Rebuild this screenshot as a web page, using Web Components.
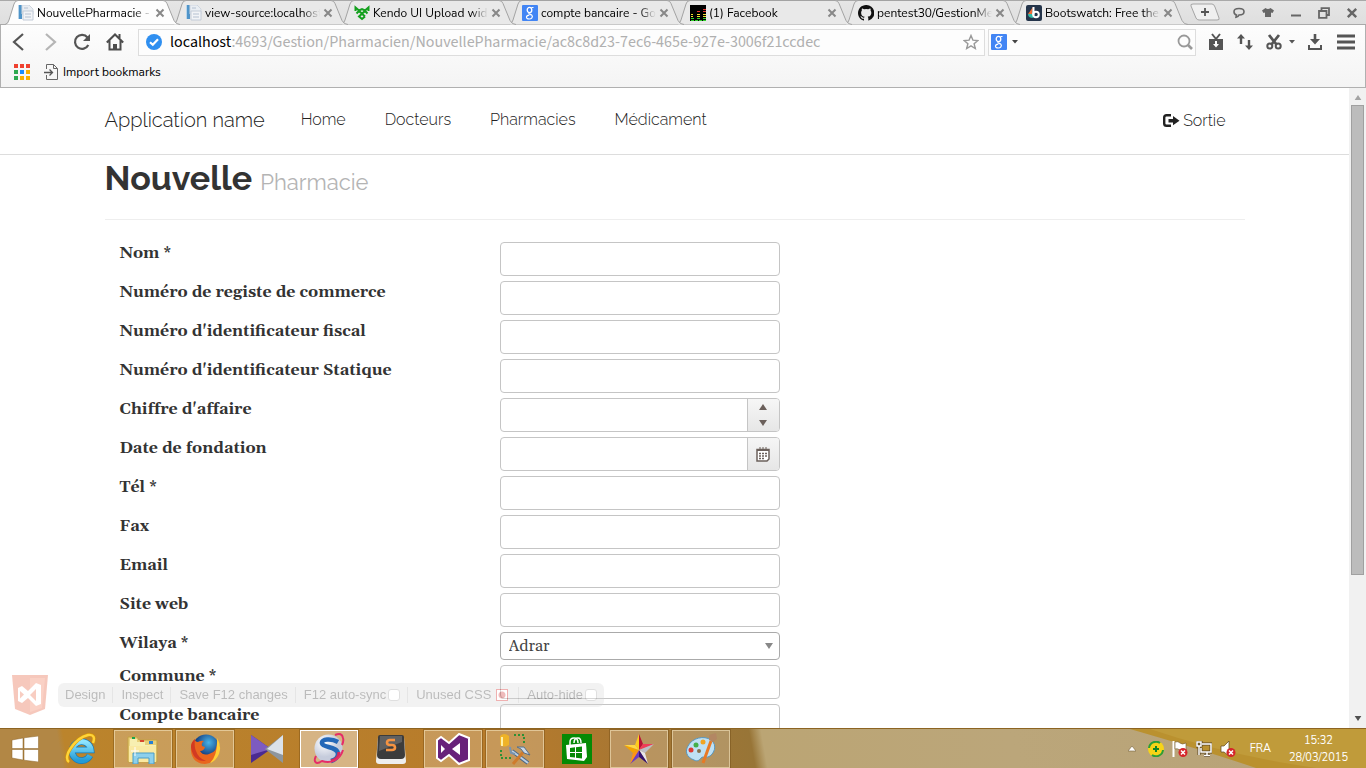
<!DOCTYPE html>
<html lang="fr">
<head>
<meta charset="utf-8">
<title>NouvellePharmacie - Application name</title>
<style>
html,body{margin:0;height:100%}
body{font-family:"Nunito Sans","Open Sans",sans-serif;color:#333;background:#fff;overflow:hidden}
</style>
</head>
<body>
<desktop-screen></desktop-screen>
<script>
const ICONS = {
doc:['0 0 16 16','<path d="M1 0h3v14H1z" fill="#4f94c9"/><path d="M0 0h1v14H0z" fill="#b9d5ea"/><path d="M4 0h7l4 4v5H4z" fill="#e9edf2" stroke="#cfd6df"/><path d="M5 6h10v9H5z" fill="#f2f4f7" stroke="#c3ccd8"/><path d="M6 3h4M7 9h6M7 12h6" stroke="#b4c0d0"/>'],
kendo:['0 0 16 16','<path d="M1.500 6V2.500L5 5.500 8 4l3 1.500 3.500-3V6M2.500 8.500L5 6l6 5.500M13.500 8.500L11 6l-6 5.500L8 14l3-2.500" fill="none" stroke="#14a01e" stroke-width="2"/>'],
google:['0 0 16 16','<rect width="16" height="16" rx="1" fill="#4285f4"/><ellipse cx="7.500" cy="5" rx="2.300" ry="2.700" fill="none" stroke="#fff" stroke-width="1.300"/><path d="M9.500 2.500h2M7.500 8c-2 1 1.500 1.300 2.300 2.200 1.600 2-.5 3.800-2.500 3.800-4 0-3.500-3.700 0-3.800" fill="none" stroke="#fff" stroke-width="1.200"/>'],
bars:['0 0 16 16','<path d="M0 0h16v16H0z"/><path d="M1 15.500h3M5 15.500h3M9 15.500h3M13 15.500h3M1 13.500h3M7 13.500h3M13 13.500h3" stroke="#2fd02b"/><path d="M1 11.500h2M7 11.500h3M13 11.500h3M1 9.500h2M7 9.500h3M13 9.500h3" stroke="#f3df30"/><path d="M7 6.500h3M13 6.500h3M13 4.500h3" stroke="#e23530"/>'],
github:['0 0 16 16','<path fill="#111" d="M8 0C3.600 0 0 3.600 0 8c0 3.500 2.300 6.500 5.500 7.600.4.100.5-.2.500-.4v-1.500c-2 .4-2.700-.9-2.900-1.300-.3-.8-1-1-.7-1.200.9-.3 1.600.6 1.800.9.700 1 1.500.8 1.900.6.100-.5.300-.8.600-1-1.900-.2-3.600-1-3.600-4 0-.9.300-1.600.8-2.100-.1-.2-.4-1 .1-2.100 0 0 .7-.2 2.200.8a7.500 7.500 0 014 0c1.500-1 2.200-.8 2.200-.8.500 1.100.2 1.900.1 2.100.5.500.8 1.200.8 2.100 0 3-1.800 3.700-3.600 4 .4.400.6.900.6 1.500v2c0 .2.100.5.500.4A8 8 0 008 0z"/>'],
boot:['0 0 16 16','<rect width="16" height="16" rx="2" fill="#24344a"/><path d="M7 3l-3 5 3 5z" fill="#20a7d8"/><path d="M7 2L2 9l4 1z" fill="#ef6c35"/><path d="M2 9q0 4 5 4V9z" fill="#35b8a5"/><path d="M7.500 2v8" stroke="#fff" stroke-width="2" fill="none"/><circle cx="10" cy="9.500" r="2.800" fill="none" stroke="#fff" stroke-width="2"/>'],
x:['0 0 10 10','<path d="M1.500 1.500l7 7M8.500 1.500l-7 7" stroke="currentColor" stroke-width="2"/>'],
plus:['0 0 30 18','<path d="M3 1h19q2 0 3 3l4 11q1 2-2 2H9q-2 0-3-2L1 3q-1-2 2-2z" fill="#f0f0f0" stroke="#a5a5a5"/><path d="M15 5v8M11 9h8" stroke="#555" stroke-width="1.800"/>'],
bubble:['0 0 14 12','<path d="M7 1.500c3 0 5 1.400 5 3.200S10 8 7 8c-.5 1.500-1.500 2-3 2.300L4.500 8C3 7.500 2 6.500 2 4.700 2 3 4 1.500 7 1.500z" fill="none" stroke="#666" stroke-width="1.600"/>'],
shirt:['0 0 12 12','<path d="M3.500 1Q6 3 8.500 1L12 3.500 10.500 6 9 5.500V10H3V5.500L1.500 6 0 3.500z" fill="#666"/>'],
min:['0 0 12 12','<path d="M1 8.500h10" stroke="#666" stroke-width="2"/>'],
restore:['0 0 12 12','<path d="M3.500 4V1.200h7.500V8H8.500M1 4h7.500v6.800H1z" fill="none" stroke="#666" stroke-width="1.800"/>'],
back:['0 0 16 18','<path d="M12 1L3 9l9 8" fill="none" stroke="#555" stroke-width="2.200"/>'],
fwd:['0 0 16 18','<path d="M4 1l9 8-9 8" fill="none" stroke="#b5b5b5" stroke-width="2.200"/>'],
reload:['0 0 18 18','<path d="M14.500 4.500A7 7 0 1 0 15.300 12" fill="none" stroke="#555" stroke-width="2.200"/><path d="M17 1v7h-7z" fill="#555"/>'],
home:['0 0 18 18','<path d="M.8 9.500L9 1.500l8.200 8M3.500 7.500v9h11v-9M13.500 1v4" fill="none" stroke="#4d4d4d" stroke-width="2"/><path d="M7 11h4v6H7z" fill="#4d4d4d"/>'],
badge:['0 0 16 16','<circle cx="8" cy="8" r="8" fill="#2f8ff0"/><path d="M4 8.200l2.800 2.600L12 5.300" fill="none" stroke="#fff" stroke-width="2.200"/>'],
star:['0 0 16 16','<path d="M8 1.500l1.900 4.600 4.900.4-3.700 3.200 1.200 4.800L8 11.900l-4.300 2.600 1.200-4.800L1.200 6.500l4.900-.4z" fill="none" stroke="#999" stroke-width="1.400"/>'],
caret:['0 0 6 4','<path d="M0 0h6L3 3.500z" fill="currentColor"/>'],
search:['0 0 16 16','<circle cx="7" cy="7" r="5.500" fill="none" stroke="#999" stroke-width="1.800"/><path d="M11 11l4 4" stroke="#999" stroke-width="2.600"/>'],
tv:['0 0 16 18','<path d="M1 6h14v11H1z" fill="#555"/><path d="M4 1l4 5 4-5" fill="none" stroke="#555" stroke-width="2"/><path d="M7 8h2v3h2l-3 3.500L5 11h2z" fill="#fff"/>'],
updown:['0 0 16 16','<path d="M4 0l4 4.500H5.200V10H2.800V4.500H0zM12 16l-4-4.500h2.800V6h2.400v5.500H16z" fill="#555"/>'],
cut:['0 0 16 16','<path d="M3 1l7.500 9.500M13 1L5.500 10.500" stroke="#555" stroke-width="2.800"/><circle cx="3.800" cy="12" r="2.500" fill="none" stroke="#555" stroke-width="2"/><circle cx="12.200" cy="12" r="2.500" fill="none" stroke="#555" stroke-width="2"/>'],
down:['0 0 14 16','<path d="M5.700 0h2.600v5H12L7 10.500 2 5h3.700z" fill="#555"/><path d="M1 11v4h12v-4" fill="none" stroke="#555" stroke-width="2"/>'],
menu:['0 0 18 16','<path d="M0 2h18M0 8h18M0 14h18" stroke="#555" stroke-width="3"/>'],
apps:['0 0 16 16','<path d="M0 0h4v4H0zM6 0h4v4H6zM12 0h4v4h-4z" fill="#ef4130"/><path d="M0 6h4v4H0zM0 12h4v4H0z" fill="#2da94f"/><path d="M6 6h4v4H6z" fill="#1a8cff"/><path d="M12 6h4v4h-4zM6 12h4v4H6zM12 12h4v4h-4z" fill="#fbaf00"/>'],
imp:['0 0 14 16','<path d="M2.500 5V.500h7l4 4v11h-11V11M9.500.500v4h4" fill="none" stroke="#666"/><path d="M0 8.500h8M5.500 5.500l3 3-3 3" fill="none" stroke="#555" stroke-width="1.300"/>'],
logout:['0 0 18 16','<path d="M9 2.200H4.500q-2.300 0-2.300 2.300v6q0 2.300 2.300 2.300H9" fill="none" stroke="#222" stroke-width="2.400"/><path d="M6.500 6H11V3l6.500 4.700L11 12.300V9.500H6.500z" fill="#222"/>'],
cal:['0 0 14 15','<path d="M1 2.500h12V12l-2 2H1z" fill="#fff" stroke="#6b605b" stroke-width="1.500"/><path d="M1 2h12v2H1z" fill="#6b605b"/><path d="M4 0v3M7 0v3M10 0v3" stroke="#6b605b"/><path d="M3 6.500h2m1 0h2m1 0h2M3 9h2m1 0h2m1 0h2M3 11.500h2m1 0h2" stroke="#6b605b" stroke-width="1.600"/>'],
up:['0 0 8 6','<path d="M0 6h8L4 0z" fill="currentColor"/>'],
dn:['0 0 8 6','<path d="M0 0h8L4 6z" fill="currentColor"/>'],
shield:['0 0 36 40','<path d="M0 0h36l-3 34-15 6-15-6z" fill="#e44d26"/><path d="M18 3v34l12-4 3-30z" fill="#ef6a43"/><path d="M6 13l4-2 6 5 8-8 5 2v19l-5 2-8-8-6 5-4-2z" fill="#fff"/><path d="M8 16l4 3.500-4 4zM24 14v12l-6-6z" fill="#ea5c35"/>'],
win:['0 0 28 26','<path d="M1 4l11-2v10.500H1zM13 1.800L27.500 0v12.500H13zM1 13.500h11V24L1 22zM13 13.500h14.500V26L13 24.200z" fill="#fff" stroke="#8b6327" stroke-width=".5"/>'],
ie:['0 0 32 32','<defs><linearGradient id="g" x2="0" y2="1"><stop stop-color="#8fe5ff"/><stop offset="1" stop-color="#229bd6"/></linearGradient></defs><path d="M25 22.500A9.500 9.500 0 1 1 26 17H9" fill="none" stroke="#1679b6" stroke-width="6.600"/><path d="M25 22.500A9.500 9.500 0 1 1 26 17H9" fill="none" stroke="url(#g)" stroke-width="5.200"/><path d="M4 29C-3 24 10 5 23 2c6-1 7 3 5 8" fill="none" stroke="#d89800" stroke-width="3.400"/><path d="M4 29C-3 24 10 5 23 2c6-1 7 3 5 8" fill="none" stroke="#ffd43a" stroke-width="2.400"/>'],
folder:['0 0 32 30','<path d="M1 3h9l2 3h18v22H1z" fill="#e8cf78" stroke="#c4a344"/><path d="M3 5h7v3h8v3h11v17H2z" fill="#f7efb1"/><path d="M5 3h3v2H5z" fill="#18a34d"/><path d="M13 6h4v2h-4z" fill="#d8452e"/><path d="M22 7h4v3h-4z" fill="#2580d5"/><path d="M2 12h27v16H2z" fill="#f9e9a2"/><path d="M6 30V19h21v11h-5v-6H11v6z" fill="#8dd0ec" stroke="#4b9dc7"/><path d="M8 13v9M4 17h8" stroke="#fff"/>'],
fox:['0 0 32 32','<defs><radialGradient id="g" cx=".6" cy=".3"><stop stop-color="#48b3e8"/><stop offset="1" stop-color="#123a7d"/></radialGradient></defs><circle cx="17" cy="15" r="13.500" fill="url(#g)"/><path d="M28 7q4 7 2 13-4 10-14 11C6 31 1 23 2 14q0-5 4-8 0 3 3 3 4-2 6-1-3 2-2 5l3 1q-1 4-5 4 3 5 9 3 9-2 8-14z" fill="#e9661e"/><path d="M28 5q5 8 2 16-3 7-9 9 8-8 7-25z" fill="#ffce38"/><path d="M2 14q0-5 4-8-1 8 1 12 2 7 10 10Q4 29 2 14z" fill="#d23a22"/>'],
media:['0 0 32 28','<path d="M0 0l20 14L0 28z" fill="#4b2a92"/><path d="M0 0l20 14L0 20z" fill="#7d5bc0"/><path d="M32 0L14 14l18 14z" fill="#8e969d"/><path d="M32 0L16 14l16 6z" fill="#dbe2ea"/>'],
sogou:['0 0 32 32','<defs><radialGradient id="g" cx=".35" cy=".3"><stop stop-color="#fff"/><stop offset="1" stop-color="#c6ccdc"/></radialGradient></defs><circle cx="15.500" cy="15.500" r="14" fill="url(#g)"/><path d="M25 9C18 5 8 6 9 10.500S25 13 25 21c0 3-3 6-7 7" fill="none" stroke="#2468b8" stroke-width="4.500"/><path d="M26 19c0 5-4 8-8 9" fill="none" stroke="#d42a5c" stroke-width="3"/><path d="M22 2q7-3 8 3 1 3-1 7M30 17C27 27 18 31 9 28c-6 4-9 1-6-5" fill="none" stroke="#e52d68" stroke-width="2"/>'],
sublime:['0 0 32 30','<path d="M3 3h26l2 24q0 3-3 3H4q-3 0-3-3z" fill="#eee"/><path d="M5 1h22q2 0 2 2l1 18q0 4-4 4H6q-4 0-4-4L3 3q0-2 2-2z" fill="#3c3c3c"/><path d="M5 2h22v6L4 17z" fill="#606060"/><path d="M20 6h-5q-3 0-3 2.500t3 2.500h2q3 0 3 2.500T17 16h-6" fill="none" stroke="#f59342" stroke-width="2.600"/>'],
vs:['0 0 34 32','<path d="M23 1l10 4v22l-10 4-10-9-8 6-4-3V7l4-3 8 6z" fill="#68217a" stroke="#fff" stroke-width="2"/><path d="M5 12v8l4-4zM24 10v12l-8-6z" fill="#fff"/>'],
tools:['0 0 32 32','<path d="M15 2h10v10M2 17v8h10" fill="none" stroke="#2c9136" stroke-width="2" stroke-dasharray="2 2"/><path d="M1 3q4-4 9 0v9q-5 3-9 0z" fill="#efb327"/><path d="M3 4v9" stroke="#fff0a5" stroke-width="2"/><path d="M13 18l16 12" stroke="#4a6684" stroke-width="4"/><path d="M13 18l16 12" stroke="#bdd0e2" stroke-width="2"/><path d="M14 31l12-14" stroke="#cf7b2b" stroke-width="3"/><path d="M18 14l7 0 6 8-6-2-3-4z" fill="#cbd8e6" stroke="#57708a"/><path d="M11 14l1 6 4 1" fill="none" stroke="#7894b0" stroke-width="2"/>'],
store:['0 0 30 30','<path d="M0 0h30v30H0z" fill="#058a05"/><path d="M4 11l20-2 1 14-3 4-17-2z" fill="#fff"/><path d="M8 12V8q0-4 4-4t4 5M12 9q0-5 4-5 3 0 3 5" fill="none" stroke="#fff" stroke-width="1.500"/><path d="M8 14l5-.7V18H8zM14 13.200l6-.8V18h-6zM8 19h5v4.500L8 23zM14 19h6v5.500l-6-.8z" fill="#058a05"/>'],
starc:['0 0 32 32','<path d="M16 1v16l-4-5z" fill="#ffcb1f"/><path d="M16 1l4 10-4 6z" fill="#b91035"/><path d="M31 11l-15 6 4-6z" fill="#ef3b58"/><path d="M31 11l-9 9-6-3z" fill="#bcbcc5"/><path d="M25 31l-9-14 6 3z" fill="#e7e7ec"/><path d="M25 31l-9-7v-7z" fill="#33106e"/><path d="M7 31l9-14v7z" fill="#6c3cc0"/><path d="M7 31l3-11 6-3z" fill="#ff9315"/><path d="M1 12l15 5-6 3z" fill="#f5a200"/><path d="M1 12h11l4 5z" fill="#ffd943"/>'],
paint:['0 0 32 32','<path d="M3 13c4-8 16-11 23-6s3 15-3 17c-4 1-5-1-7 1s-3 4-7 2c-8-3-9-9-6-14z" fill="#bfe1f4" stroke="#5796be"/><circle cx="6" cy="17" r="2.500" fill="#df3b32"/><circle cx="11" cy="12" r="2.500" fill="#43b04a"/><circle cx="18" cy="9" r="2.500" fill="#f1a522"/><circle cx="14" cy="18" r="2" fill="#86714b"/><path d="M18 30l8-22" stroke="#e87a25" stroke-width="3"/><path d="M24 2l7-2 1 6-4 3-4-2z" fill="#b38763"/>'],
sync:['0 0 16 16','<circle cx="8" cy="8" r="8" fill="#f7d417"/><path d="M1 7a7 7 0 0 1 11-5M15 9a7 7 0 0 1-11 5" fill="none" stroke="#2c9c3a" stroke-width="2"/><path d="M8 5v6M5 8h6" stroke="#118427" stroke-width="2"/>'],
flag:['0 0 16 16','<path d="M1.500 0v16" stroke="#fff" stroke-width="2"/><path d="M3 1q3-1 5 1t6 0v7q-3 2-6 0T3 8z" fill="#fff" stroke="#6f5a30" stroke-width=".6"/><circle cx="11" cy="11.500" r="4.500" fill="#d5252a"/><path d="M9 9.500l4 4m0-4l-4 4" stroke="#fff" stroke-width="1.500"/>'],
net:['0 0 16 16','<path d="M6 3h9v8H5V7M8 14.500h6M11 11v3M1 1h4v4H1zM3 5v9" fill="none" stroke="#5a4520" stroke-width="3"/><path d="M6 3h9v8H5V7M8 14.500h6M11 11v3M1 1h4v4H1zM3 5v9" fill="none" stroke="#fff" stroke-width="1.500"/>'],
vol:['0 0 16 16','<path d="M1 5h3l5-5v15l-5-4H1z" fill="#fff" stroke="#5a4520" stroke-width=".7"/><circle cx="11" cy="11.500" r="4.500" fill="#d5252a"/><path d="M9 9.500l4 4m0-4l-4 4" stroke="#fff" stroke-width="1.500"/>'],
tray:['0 0 8 6','<path d="M0 5l4-5 4 5z" fill="#fff" stroke="#776239" stroke-width=".6"/>']
};
function define(name, html, setup){
  const t=document.createElement('template'); t.innerHTML=html;
  customElements.define(name, class extends HTMLElement{
    constructor(){super();this.attachShadow({mode:'open'}).append(t.content.cloneNode(true));}
    connectedCallback(){if(setup&&!this.ready){this.ready=true;setup(this,this.shadowRoot);}}
  });
}
const RESET='*{box-sizing:border-box}button{font:inherit;color:inherit;background:none;border:0;padding:0;margin:0}a{color:inherit;text-decoration:none}';

define('ui-icon','<style>:host{display:inline-flex;flex:none}svg{display:block}</style>',(el,r)=>{
  const [vb,body]=ICONS[el.getAttribute('name')], d=vb.split(' ');
  r.innerHTML+=`<svg aria-hidden="true" width="${el.getAttribute('w')||d[2]}" height="${el.getAttribute('h')||d[3]}" viewBox="${vb}">${body}</svg>`;
});

define('browser-tab',`<style>${RESET}
:host{display:block;flex:0 1 168px;min-width:0;position:relative;height:25px;font-size:12px;color:#000}
svg.shape{position:absolute;left:0;top:0;width:calc(100% + 8px);height:25px}
.in{position:relative;display:flex;align-items:center;height:25px;padding:1px 8px 0 13px;gap:3px}
a{flex:1;min-width:0;white-space:nowrap;overflow:hidden;line-height:20px;-webkit-mask:linear-gradient(90deg,#000 85%,transparent);mask:linear-gradient(90deg,#000 85%,transparent)}
button{display:flex;color:#888;padding:0}
</style><svg class="shape" viewBox="0 0 176 25" preserveAspectRatio="none"><path d="M0 24.500Q3 24 4 20L9 4q1-3.500 4-3.500h145q3 0 4 3l7 17q2 4 6 4"/></svg>
<div class="in"><slot name="icon"></slot><a href="#"><slot></slot></a><button aria-label="Fermer"><ui-icon name="x"></ui-icon></button></div>`,(el,r)=>{
  const p=r.querySelector('path');p.setAttribute('stroke','#a3a3a3');p.setAttribute('fill',el.hasAttribute('active')?'#fdfdfd':'#e9e9e9');
});

define('tab-strip',`<style>${RESET}
:host{display:flex;align-items:stretch;height:25px;padding-left:5px;background:linear-gradient(#e6e6e6,#dedede);box-shadow:inset 0 1px #a9a9a9,inset 0 -1px #a9a9a9}
.tabs{display:flex;flex:1 1 auto;min-width:0;isolation:isolate}
.new{margin:3px 0 0 9px;flex:none}
.win{display:flex;align-items:center;gap:16px;padding:0 8px 0 12px;color:#666;flex:none}
button{display:flex}
</style><div class="tabs">
<browser-tab active style="z-index:7"><ui-icon slot="icon" name="doc"></ui-icon>NouvellePharmacie - Application</browser-tab>
<browser-tab style="z-index:6"><ui-icon slot="icon" name="doc"></ui-icon>view-source:localhost:4693</browser-tab>
<browser-tab style="z-index:5"><ui-icon slot="icon" name="kendo"></ui-icon>Kendo UI Upload widget</browser-tab>
<browser-tab style="z-index:4"><ui-icon slot="icon" name="google"></ui-icon>compte bancaire - Google</browser-tab>
<browser-tab style="z-index:3"><ui-icon slot="icon" name="bars"></ui-icon>(1) Facebook</browser-tab>
<browser-tab style="z-index:2"><ui-icon slot="icon" name="github"></ui-icon>pentest30/GestionMedical</browser-tab>
<browser-tab style="z-index:1"><ui-icon slot="icon" name="boot"></ui-icon>Bootswatch: Free themes</browser-tab>
<button class="new" aria-label="Nouvel onglet"><ui-icon name="plus"></ui-icon></button></div>
<div class="win"><button aria-label="Messages"><ui-icon name="bubble"></ui-icon></button><button aria-label="Thèmes"><ui-icon name="shirt"></ui-icon></button><button aria-label="Réduire"><ui-icon name="min"></ui-icon></button><button aria-label="Restaurer"><ui-icon name="restore"></ui-icon></button><button aria-label="Fermer"><ui-icon name="x" w="12" h="12"></ui-icon></button></div>`);

define('address-bar',`<style>${RESET}
:host{display:flex;align-items:center;height:34px;padding:0 10px}
button{display:flex;flex:none}
.nav{display:flex;gap:15px;align-items:center;margin-right:14px}
.box{display:flex;align-items:center;height:27px;border:1px solid #ddd;background:#fdfdfd}
.url{flex:1;padding:0 5px 0 7px;gap:8px;min-width:0}
.url a{flex:1;min-width:0;overflow:hidden;white-space:nowrap;font:16px/24px "Source Sans 3","Open Sans",sans-serif;color:#b0b0b0}
.url b{font-weight:400;color:#000}
.find{width:208px;margin-left:3px;padding:0 2px;gap:5px;color:#444}
input{flex:1;min-width:0;border:0;background:none;outline:0}
.tools{display:flex;align-items:center;gap:13px;margin-left:12px;color:#555}
.cut{display:flex;align-items:center;gap:7px}
.menu{margin-left:2px}
</style><div class="nav"><button aria-label="Précédent"><ui-icon name="back"></ui-icon></button><button aria-label="Suivant"><ui-icon name="fwd"></ui-icon></button><button aria-label="Recharger"><ui-icon name="reload"></ui-icon></button><button aria-label="Accueil"><ui-icon name="home"></ui-icon></button></div>
<div class="box url"><ui-icon name="badge"></ui-icon><a href="#"><b>localhost</b>:4693/Gestion/Pharmacien/NouvellePharmacie/ac8c8d23-7ec6-465e-927e-3006f21ccdec</a><button aria-label="Favori"><ui-icon name="star"></ui-icon></button></div>
<div class="box find"><ui-icon name="google"></ui-icon><button aria-label="Moteur"><ui-icon name="caret"></ui-icon></button><input type="text" aria-label="Recherche"><button aria-label="Chercher"><ui-icon name="search"></ui-icon></button></div>
<div class="tools"><button aria-label="Vidéo"><ui-icon name="tv"></ui-icon></button><button aria-label="Transferts"><ui-icon name="updown"></ui-icon></button><span class="cut"><button aria-label="Capture"><ui-icon name="cut"></ui-icon></button><button aria-label="Options de capture"><ui-icon name="caret"></ui-icon></button></span><button aria-label="Téléchargements"><ui-icon name="down"></ui-icon></button><button class="menu" aria-label="Menu"><ui-icon name="menu"></ui-icon></button></div>`);

define('bookmark-bar',`<style>${RESET}
:host{display:flex;align-items:center;height:28px;padding:0 14px 3px 13px;gap:14px;font-size:12px;color:#000}
a{display:flex;align-items:center;gap:5px;line-height:16px}
</style><a href="#" aria-label="Applications"><ui-icon name="apps"></ui-icon></a><a href="#"><ui-icon name="imp"></ui-icon><span>Import bookmarks</span></a>`);

define('site-nav',`<style>${RESET}
:host{display:block;border-bottom:1px solid #ddd;font-family:Raleway,Lato,sans-serif;font-weight:300;color:#222}
nav{display:flex;align-items:center;max-width:1170px;height:66px;margin:0 auto;padding:0 34px 2px 15px;font-size:16px;line-height:24px}
.brand{font-size:20px;margin-right:36px}
.links{display:flex;gap:39px}
.out{display:flex;align-items:center;gap:3px;margin-left:auto;padding-top:2px}
</style><nav><a class="brand" href="#">Application name</a><div class="links"><a href="#">Home</a><a href="#">Docteurs</a><a href="#">Pharmacies</a><a href="#">Médicament</a></div><a class="out" href="#"><ui-icon name="logout"></ui-icon>Sortie</a></nav>`);

define('page-title',`<style>:host{display:block;border-bottom:1px solid #eee;font-family:Raleway,Lato,sans-serif}
h1{margin:0;font-size:34px;line-height:46px;font-weight:700;color:#333;padding-bottom:14px}
small{font-size:22px;font-weight:400;color:#b4b4b4}</style><h1><slot></slot> <small><slot name="sub"></slot></small></h1>`);

define('form-field',`<style>${RESET}
:host{display:grid;grid-template-columns:380px 280px;padding-bottom:5px;align-items:start;font:16px/22px Gelasio,Georgia,"Liberation Serif",serif}
label{font-weight:700;color:#333}
label span{font-weight:400}
.box{display:flex;height:34px;border:1px solid #c5c5c5;border-radius:4px;overflow:hidden;background:#fff}
.box.sel{height:28px;border-color:#aaa;color:#888}
input,select{flex:1;min-width:0;border:0;background:none;padding:0 8px;outline:0;font:inherit;color:#444;appearance:none;-webkit-appearance:none}
input::-webkit-inner-spin-button{display:none}
.sel ui-icon{align-self:center;margin-right:6px}
.side{display:flex;flex-direction:column;justify-content:space-around;align-items:center;width:32px;border-left:1px solid #c5c5c5;background:linear-gradient(#f6f6f6,#e6e6e6);color:#6b605b}
.side button{display:flex}
</style><label for="f"></label><div class="box"></div>`,(el,r)=>{
  const kind=el.getAttribute('kind')||'text', box=r.querySelector('.box'), lab=r.querySelector('label');
  lab.textContent=el.getAttribute('label');
  if(el.hasAttribute('required')) lab.innerHTML+=' <span>*</span>';
  if(kind==='select'){box.classList.add('sel');box.innerHTML=`<select id="f"><option>${el.getAttribute('value')}</option></select><ui-icon name="dn" w="8" h="6"></ui-icon>`;}
  else box.innerHTML=`<input id="f" type="${kind==='number'?'number':'text'}">`+
    (kind==='number'?'<span class="side"><button aria-label="Augmenter"><ui-icon name="up"></ui-icon></button><button aria-label="Diminuer"><ui-icon name="dn"></ui-icon></button></span>':
     kind==='date'?'<span class="side"><button aria-label="Calendrier"><ui-icon name="cal"></ui-icon></button></span>':'');
});

define('dev-toolbar',`<style>${RESET}
:host{display:flex;align-items:center;gap:10px;opacity:.3;font:13px/24px "Liberation Sans",Arial,sans-serif;color:#222}
.bar{display:flex;align-items:center;height:24px;padding:0 7px;background:#d6d6d6;border-radius:6px}
.bar>*{display:flex;align-items:center;gap:2px;line-height:16px}
.bar>*+*{border-left:1px solid #aaa;margin-left:7px;padding-left:8px}
input{appearance:none;-webkit-appearance:none;width:12px;height:12px;margin:0;border:1px solid #999;border-radius:3px;background:#fff}
input:checked{border-color:#c00;border-radius:0;background:radial-gradient(#c22 0 3px,#fff 4px)}
.red{gap:5px}
.red+label{margin-left:10px}
</style><ui-icon name="shield"></ui-icon><div class="bar"><button>Design</button><button>Inspect</button><button>Save F12 changes</button><label>F12 auto-sync<input type="checkbox"></label><label class="red">Unused CSS<input type="checkbox" checked></label><label>Auto-hide<input type="checkbox"></label></div>`);

define('page-scrollbar',`<style>:host{display:flex;flex-direction:column;align-items:center;width:17px;background:#f1f1f1;flex:none;color:#a3a3a3;padding:7px 0}
.thumb{width:13px;height:75%;background:#bcbcbc;border:1px solid #a0a0a0;box-sizing:border-box;margin-top:5px}
.dn{margin-top:auto;color:#505050}</style><ui-icon name="up" w="8" h="5"></ui-icon><div class="thumb"></div><ui-icon class="dn" name="dn" w="8" h="5"></ui-icon>`);

define('task-button',`<style>${RESET}
:host{display:flex;flex:0 0 58px}
button{flex:1;display:flex;align-items:center;justify-content:center;border:1px solid transparent}
:host([open]) button{background:rgba(255,255,255,.22);border-color:rgba(245,228,190,.6);box-shadow:0 0 0 1px rgba(100,65,15,.35)}
:host([current]) button{background:rgba(255,255,255,.42);border-color:#fff}
</style><button><slot></slot></button>`,(el,r)=>r.querySelector('button').setAttribute('aria-label',el.title));

define('task-bar',`<style>${RESET}
:host{display:flex;position:relative;height:40px;color:#fff;font-size:11px;line-height:17px;border-top:1px solid #8d6422;
background:linear-gradient(80deg,#b28745 0,#b28745 62px,#bb842c 68px,#b77b2b 500px,#a97732 610px,#987537 744px,#bba574 756px,#bba67a 1000px,#b7a277)}
.light{position:absolute;right:0;bottom:0}
.apps{display:flex;gap:4px;flex:1;padding-top:1px}
.start{display:flex;align-items:center;width:48px;padding-left:11px}
.tray{position:relative;display:flex;align-items:center;gap:8px;padding-right:18px}
.lang{margin:0 10px 0 6px}
.clock{text-align:center}
.arrow{margin-right:4px}
</style><svg class="light" width="240" height="39" aria-hidden="true"><path d="M4 0H240V39H130Q80 22 4 0z" fill="#ba912f"/><path d="M24 0H240V39H190Q100 26 24 0z" fill="#c09b3a"/></svg><div class="apps"><button class="start" aria-label="Démarrer"><ui-icon name="win"></ui-icon></button>
<task-button title="Internet Explorer"><ui-icon name="ie"></ui-icon></task-button>
<task-button open title="Explorateur"><ui-icon name="folder"></ui-icon></task-button>
<task-button open title="Firefox"><ui-icon name="fox"></ui-icon></task-button>
<task-button title="Lecteur"><ui-icon name="media"></ui-icon></task-button>
<task-button open current title="Navigateur"><ui-icon name="sogou"></ui-icon></task-button>
<task-button title="Éditeur"><ui-icon name="sublime"></ui-icon></task-button>
<task-button open title="Visual Studio"><ui-icon name="vs"></ui-icon></task-button>
<task-button open title="SQL Server"><ui-icon name="tools"></ui-icon></task-button>
<task-button title="Store"><ui-icon name="store"></ui-icon></task-button>
<task-button open title="Étoile"><ui-icon name="starc"></ui-icon></task-button>
<task-button open title="Paint"><ui-icon name="paint"></ui-icon></task-button></div>
<div class="tray"><ui-icon class="arrow" name="tray"></ui-icon><ui-icon name="sync"></ui-icon><ui-icon name="flag"></ui-icon><ui-icon name="net"></ui-icon><ui-icon name="vol"></ui-icon><span class="lang">FRA</span><div class="clock"><div>15:32</div><div>28/03/2015</div></div></div>`);

define('desktop-screen',`<style>${RESET}
:host{display:flex;flex-direction:column;height:100vh}
.chrome{background:linear-gradient(#fdfdfd,#f4f4f4);border:solid #b0b0b0;border-width:0 1px 1px}
.view{display:flex;flex:1;min-height:0;position:relative}
main{flex:1;min-width:0;overflow:hidden}
.wrap{max-width:1170px;margin:0 auto;padding:0 15px}
form{padding:22px 15px 0}
dev-toolbar{position:absolute;left:12px;bottom:13px}
</style><tab-strip></tab-strip><div class="chrome"><address-bar></address-bar><bookmark-bar></bookmark-bar></div>
<div class="view"><main><site-nav></site-nav><div class="wrap"><page-title>Nouvelle<span slot="sub">Pharmacie</span></page-title>
<form><form-field label="Nom" required></form-field><form-field label="Numéro de registe de commerce"></form-field><form-field label="Numéro d'identificateur fiscal"></form-field><form-field label="Numéro d'identificateur Statique"></form-field><form-field label="Chiffre d'affaire" kind="number"></form-field><form-field label="Date de fondation" kind="date"></form-field><form-field label="Tél" required></form-field><form-field label="Fax"></form-field><form-field label="Email"></form-field><form-field label="Site web"></form-field><form-field label="Wilaya" required kind="select" value="Adrar"></form-field><form-field label="Commune" required></form-field><form-field label="Compte bancaire"></form-field></form></div></main>
<page-scrollbar></page-scrollbar><dev-toolbar></dev-toolbar></div><task-bar></task-bar>`);
</script>
</body>
</html>
